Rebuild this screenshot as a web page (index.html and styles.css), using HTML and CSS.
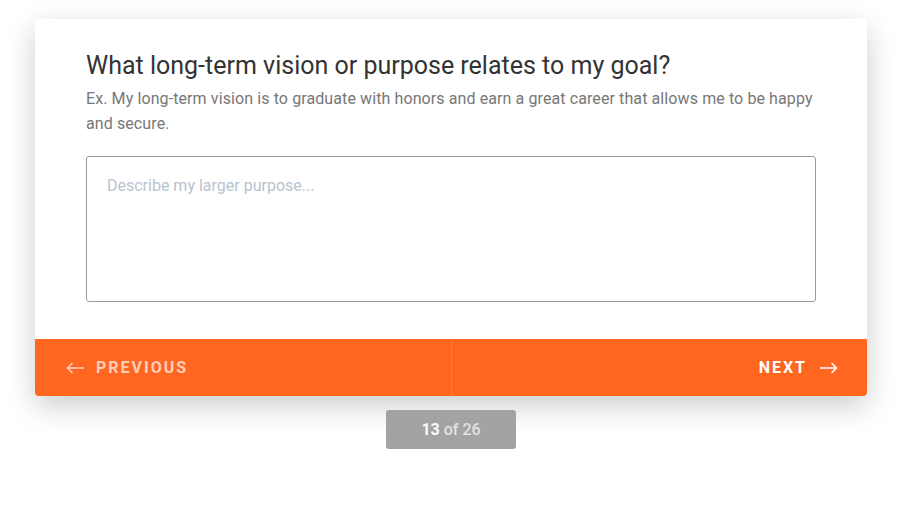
FILE: index.html
```html
<!DOCTYPE html>
<html lang="en">
<head>
    <meta charset="UTF-8">
    <meta name="viewport" content="width=device-width, initial-scale=1.0">
    <title>Goal Worksheet</title>
    <link rel="stylesheet" href="styles.css">
</head>
<body>

<div class="page">
    <div class="card">
        <div class="card-body">
            <h2 class="question">What long-term vision or purpose relates to my goal?</h2>
            <p class="hint">Ex. My long-term vision is to graduate with honors and earn a great career that allows me to be happy and secure.</p>
            <textarea class="answer" placeholder="Describe my larger purpose..."></textarea>
        </div>
        <div class="card-nav">
            <button class="nav-btn prev" type="button">
                <svg width="19" height="12" viewBox="0 0 19 12"><path d="M18 6H1.5M6.5 1L1.5 6l5 5" fill="none" stroke="currentColor" stroke-width="1.6"/></svg>
                <span>Previous</span>
            </button>
            <button class="nav-btn next" type="button">
                <span>Next</span>
                <svg width="19" height="12" viewBox="0 0 19 12"><path d="M1 6h16.5M12.5 1l5 5-5 5" fill="none" stroke="currentColor" stroke-width="1.6"/></svg>
            </button>
        </div>
    </div>
    <div class="progress"><b>13</b> of 26</div>
</div>

</body>
</html>
```

FILE: styles.css
```css
body {
    margin: 0;
    font-family: Roboto, "Liberation Sans", sans-serif;
    background-color: #fff;
}
.page {
    width: 832px;
    padding: 19px 0 0 35px;
    display: flex;
    flex-direction: column;
    align-items: center;
}
.card {
    width: 100%;
    background-color: #fff;
    border-radius: 4px;
    overflow: hidden;
    box-shadow: 0 10px 30px rgba(0, 0, 0, 0.2);
}
.card-body {
    padding: 31px 51px 37px;
}
.question {
    margin: 0;
    font-size: 25px;
    font-weight: 400;
    line-height: 32px;
    color: #333;
}
.hint {
    margin: 4px 0 0;
    font-size: 16px;
    line-height: 25px;
    letter-spacing: 0.1px;
    color: #777;
}
.answer {
    display: block;
    width: 100%;
    height: 146px;
    margin-top: 20px;
    padding: 19px 20px;
    box-sizing: border-box;
    border: 1px solid #999;
    border-radius: 3px;
    font-family: Roboto, "Liberation Sans", sans-serif;
    font-size: 16px;
    resize: none;
    outline: none;
}
.answer::placeholder {
    color: #b8c3d0;
}
.card-nav {
    display: flex;
    height: 57px;
    background-color: #ff6720;
}
.nav-btn {
    flex: 1;
    display: flex;
    align-items: center;
    gap: 11px;
    padding: 0 29px 0 31px;
    background: none;
    border: none;
    font-family: Roboto, "Liberation Sans", sans-serif;
    font-size: 16px;
    font-weight: 700;
    letter-spacing: 2px;
    text-transform: uppercase;
    cursor: pointer;
}
.nav-btn.prev {
    color: rgba(255, 255, 255, 0.7);
    border-right: 1px solid rgba(255, 255, 255, 0.12);
}
.nav-btn.next {
    color: #fff;
    justify-content: flex-end;
    gap: 12px;
}
.progress {
    margin-top: 14px;
    width: 130px;
    height: 39px;
    line-height: 39px;
    text-align: center;
    border-radius: 3px;
    background-color: #a3a3a3;
    color: #e2e2e2;
    font-size: 16px;
    font-weight: 500;
}
.progress b {
    color: #fafafa;
    font-weight: 700;
}
```
